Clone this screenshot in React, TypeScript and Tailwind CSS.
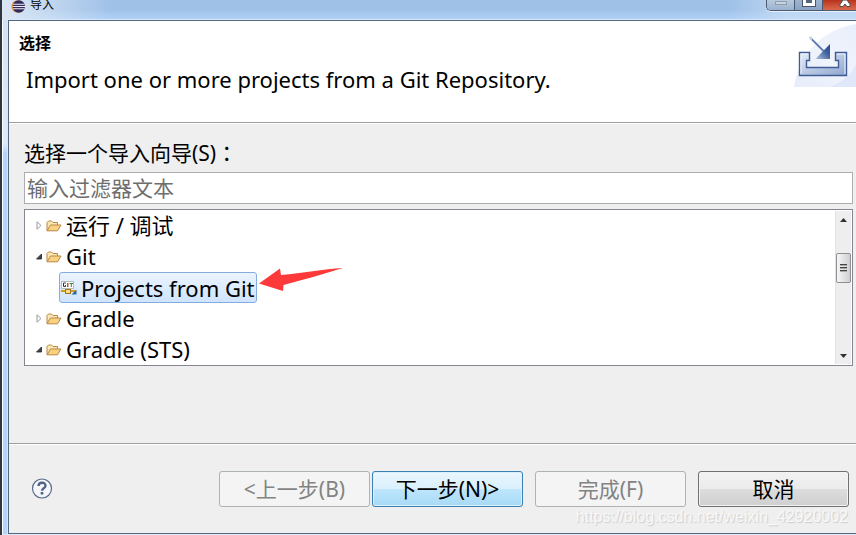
import React, { useState } from "react";

const FONT =
  "font-['Noto_Sans','Noto_Sans_CJK_SC',sans-serif]";

function EclipseIcon() {
  return (
    <svg width="15" height="14" viewBox="0 0 15 14" aria-hidden="true">
      <circle cx="6.6" cy="6.5" r="6.2" fill="#f0963c" />
      <circle cx="7.8" cy="6.5" r="6.2" fill="#322a5c" />
      <path d="M2 4.3H13.5M1.6 6.5H14M2 8.7H13.5" stroke="#eeedf6" strokeWidth="1.1" />
    </svg>
  );
}

function ImportBanner() {
  return (
    <svg width="62" height="64" viewBox="0 0 62 64" aria-hidden="true" className="block">
      <defs>
        <linearGradient id="halo" x1="0" y1="1" x2="1" y2="0">
          <stop offset="0" stopColor="#e6ecfa" />
          <stop offset="0.5" stopColor="#eff3fc" />
          <stop offset="1" stopColor="#e9effb" />
        </linearGradient>
        <linearGradient id="tray" x1="0" y1="0" x2="1" y2="1">
          <stop offset="0" stopColor="#e6edf8" />
          <stop offset="1" stopColor="#8ea5d0" />
        </linearGradient>
        <linearGradient id="head" x1="0" y1="1" x2="1" y2="0">
          <stop offset="0" stopColor="#b4c4e0" />
          <stop offset="0.6" stopColor="#3c5f9e" />
          <stop offset="1" stopColor="#2a4a8a" />
        </linearGradient>
      </defs>
      <path d="M0 64C4 34 24 8 62 1V64Z" fill="url(#halo)" />
      <path d="M36 64C52 58 58 48 62 42V64Z" fill="#dfe7f8" />
      <path
        d="M5.500 29.500H15.500V37.500H12.500V44.500H44.500V37.500H41.500V29.500H52.500V52.500H5.500Z"
        fill="url(#tray)"
        stroke="#3f5c94"
        strokeWidth="1.400"
      />
      <path d="M7 51V31H14M51 31V51M43 31H51" fill="none" stroke="#eef3fb" strokeWidth="1" />
      <path d="M16.500 15L30 28.500" stroke="#5f7cb0" strokeWidth="1.800" />
      <path d="M15.500 14L18 16.500" stroke="#c3cfe4" strokeWidth="2" />
      <path d="M36 21V36H21.500Z" fill="url(#head)" />
    </svg>
  );
}

function FolderIcon() {
  return (
    <svg width="16" height="12" viewBox="0 0 16 12" aria-hidden="true" className="shrink-0">
      <path
        d="M1 10.500V2.500L2.500 1H5.500L7 2.500H11.500V5"
        fill="#fbe7b4"
        stroke="#b98742"
        strokeLinejoin="round"
      />
      <path
        d="M1 10.800L4.500 5H15L11.500 10.800Z"
        fill="#f8d282"
        stroke="#b98742"
        strokeLinejoin="round"
      />
    </svg>
  );
}

function GitProjectIcon() {
  return (
    <svg width="16" height="16" viewBox="0 0 16 16" aria-hidden="true" className="shrink-0">
      <rect x="0.500" y="1.500" width="12" height="7" fill="#fff" stroke="#b9bdb5" />
      <path d="M4.800 3H2.500V6.500H4.500V5" fill="none" stroke="#333" />
      <path d="M6.800 3V7" stroke="#c03030" strokeWidth="1.300" />
      <path d="M8.500 3.500H12M10.300 3V7" stroke="#2f8a3f" />
      <path d="M0 11H14" stroke="#d79a1d" strokeWidth="2" />
      <rect x="4.500" y="9.500" width="5" height="4" fill="#fbe08a" stroke="#a8741a" />
      <path d="M15.500 9.500V14.500H10.500Z" fill="#2f67a5" />
    </svg>
  );
}

function Twisty({ open }: { open: boolean }) {
  return (
    <svg width="9" height="9" viewBox="0 0 9 9" aria-hidden="true">
      {open ? (
        <path d="M6.500 2V7H1.500Z" fill="#444" stroke="#222" strokeWidth="0.800" />
      ) : (
        <path d="M2 0.800L6 4.500L2 8.200Z" fill="#fff" stroke="#9a9a9a" />
      )}
    </svg>
  );
}

function FolderRow({ name, open }: { name: string; open: boolean }) {
  return (
    <li role="treeitem" aria-expanded={open} aria-label={name} className="flex h-[31px] items-center pl-2">
      <button type="button" aria-label={open ? "折叠" : "展开"} className="flex w-[13px] justify-center">
        <Twisty open={open} />
      </button>
      <button type="button" className="flex items-center gap-1 text-[22px] leading-[31px]">
        <FolderIcon />
        <span className="whitespace-nowrap">{name}</span>
      </button>
    </li>
  );
}

function PointerArrow() {
  return (
    <svg width="84" height="25" viewBox="0 0 84 25" aria-hidden="true" className="block shrink-0">
      <path d="M0 16.500L21 1.500L22 8C44 6 64 2 84 1C64 7 44 13 24.500 18L24 24Z" fill="#fd3a39" />
    </svg>
  );
}

function ScrollBar() {
  return (
    <div aria-hidden="true" className="my-px mr-px flex w-4 flex-col items-center border-l border-[#e3e3e3] bg-[#eeeeee]">
      <svg width="15" height="18" viewBox="0 0 15 18">
        <path d="M4 11L7.500 7L11 11Z" fill="#333" />
      </svg>
      <div className="mt-6 flex h-[30px] w-[15px] flex-col items-center justify-center gap-px rounded-xs border border-[#8f8f93] bg-linear-to-r from-[#f7f7f7] to-[#cfcfd2]">
        <span className="h-0.5 w-[7px] border-t border-[#444] bg-[#aaa]" />
        <span className="h-0.5 w-[7px] border-t border-[#444] bg-[#aaa]" />
        <span className="h-0.5 w-[7px] border-t border-[#444] bg-[#aaa]" />
      </div>
      <svg width="15" height="18" viewBox="0 0 15 18" className="mt-auto">
        <path d="M4 8L7.500 12L11 8Z" fill="#333" />
      </svg>
    </div>
  );
}

const BUTTON = "h-9 w-[151px] rounded-[3px] border text-[21px] leading-[34px] whitespace-nowrap";
const DISABLED = "border-[#adb2b5] bg-[#f4f4f4] text-[#838383]";

export default function App() {
  const [filter, setFilter] = useState("");
  return (
    <div className={`relative flex min-h-screen flex-col border-l-2 border-[#2f3640] bg-[#b5d5f8] text-black ${FONT}`}>
      <header className="flex h-5 items-start border-b border-[#d9e8f8] bg-[linear-gradient(to_right,#dbe7f4_0,#dbe7f400_110px,#cfe2f600_85%,#cfe2f6a0_92%),linear-gradient(to_bottom,#9fc1e8_50%,#b0d1f6)] pl-[9px]">
        <div className="flex items-start gap-1">
          <EclipseIcon />
          <h1 className="font-['Liberation_Sans','Noto_Sans_CJK_SC',sans-serif] text-[12px] leading-[11px]">导入</h1>
        </div>
        <div className="ml-auto flex h-[11px] w-[90px] overflow-hidden rounded-bl-[5px] border-b border-l border-[#4a5a70] shadow-[0_1px_0_#e8f2fc]">
          <button type="button" aria-label="最小化" className="flex w-7 items-start justify-center border-r border-[#4a5a70] bg-linear-to-b from-[#b9c9dd] to-[#9bb2cf] pt-px">
            <span className="h-1 w-3 border border-[#8d9db0] bg-[#c9d4e0]" />
          </button>
          <button type="button" aria-label="最大化" className="flex w-7 items-start justify-center border-r border-[#4a5a70] bg-linear-to-b from-[#9db3d0] to-[#8aa3c4]">
            <span className="h-1.5 w-3 border-x-3 border-b-3 border-white bg-[#55657c] outline outline-[#4a5566]" />
          </button>
          <button type="button" aria-label="关闭" className="flex grow items-start justify-end bg-linear-to-b from-[#b8301b] to-[#dc6a4c] pr-1">
            <svg width="14" height="7" viewBox="0 0 14 7" aria-hidden="true">
              <path d="M2 6.500V4.500L5 0H9L12 4.500V6.500H9L7 4L5 6.500Z" fill="#fff" stroke="#49505c" />
            </svg>
          </button>
        </div>
      </header>

      <div className="flex grow">
        <div
          aria-hidden="true"
          className="w-1.5 shrink-0 border-x border-l-white border-r-[#d5e7fb] bg-linear-to-b from-[#d3e3f5] from-0% via-[#dcebfb] via-24% to-[#b3d5fb] to-26%"
        />
        <main className="flex min-w-0 grow flex-col border-y border-l border-[#55667f] bg-[#efefef]">
          <section className="flex h-[102px] items-start justify-between border-b border-[#9f9f9f] bg-white">
            <div className="flex min-w-0 flex-col pt-2.5 pl-2.5">
              <h2 className="text-[16px] leading-6 font-bold">选择</h2>
              <p className="mt-2 pl-[7px] text-[22px] leading-8 whitespace-nowrap">
                Import one or more projects from a Git Repository.
              </p>
            </div>
            <div className="mt-0.5 shrink-0">
              <ImportBanner />
            </div>
          </section>

          <section className="flex flex-col border-t border-white pr-[3px] pl-[15px]">
            <label htmlFor="filter" className="mt-3 text-[21px] leading-8">
              选择一个导入向导(S)
              <span className="font-['Noto_Sans_CJK_TC',sans-serif]">：</span>
            </label>
            <input
              id="filter"
              type="text"
              value={filter}
              onChange={(e) => setFilter(e.target.value)}
              placeholder="输入过滤器文本"
              className="mt-[3px] h-8 w-full border border-[#abadb3] bg-white px-0.5 text-[21px] placeholder:text-[#6d6d6d] focus:outline-none"
            />
            <div className="mt-[5px] flex border border-[#828790] bg-white">
              <ul role="tree" aria-label="导入向导" className="min-w-0 grow">
                <FolderRow name="运行 / 调试" open={false} />
                <FolderRow name="Git" open={true} />
                <li role="treeitem" aria-selected="true" className="flex h-[31px] items-center pl-[34px]">
                  <button
                    type="button"
                    className="flex h-[31px] items-center gap-1 rounded-[3px] border border-[#84acdd] bg-linear-to-b from-[#ebf4fe] to-[#cfe4fe] px-px text-[22px] leading-7 whitespace-nowrap"
                  >
                    <GitProjectIcon />
                    Projects from Git
                  </button>
                  <span className="-mt-4 ml-0.5">
                    <PointerArrow />
                  </span>
                </li>
                <FolderRow name="Gradle" open={false} />
                <FolderRow name="Gradle (STS)" open={true} />
              </ul>
              <ScrollBar />
            </div>
          </section>

          <footer className="mt-auto flex h-[90px] items-center border-t border-[#9f9f9f] pr-[7px] pl-[22px] shadow-[inset_0_1px_0_#fff]">
            <button type="button" aria-label="帮助" className="shrink-0">
              <svg width="22" height="22" viewBox="0 0 22 22" aria-hidden="true">
                <circle cx="11" cy="10.500" r="9.500" fill="#f4f6fa" stroke="#586b8c" strokeWidth="1.200" />
                <path
                  d="M7.500 8C7.500 3.700 14.500 3.700 14.500 7.700C14.500 10.300 11 10.100 11 12.700"
                  fill="none"
                  stroke="#4d6085"
                  strokeWidth="2.300"
                />
                <rect x="9.700" y="14" width="2.600" height="2.500" fill="#4d6085" />
              </svg>
            </button>
            <div className="ml-auto flex gap-3">
              <div className="flex gap-0.5">
                <button type="button" disabled className={`${BUTTON} ${DISABLED}`}>
                  &lt;上一步(B)
                </button>
                <button
                  type="button"
                  className={`${BUTTON} border-[#3c7fb1] bg-[linear-gradient(#eaf6fd,#d9f0fc_50%,#bee6fd_50%,#a7d9f5)] shadow-[inset_0_0_0_1px_#d9f1fc]`}
                >
                  下一步(N)&gt;
                </button>
              </div>
              <button type="button" disabled className={`${BUTTON} ${DISABLED}`}>
                完成(F)
              </button>
              <button
                type="button"
                className={`${BUTTON} border-[#707070] bg-[linear-gradient(#f2f2f2,#ebebeb_50%,#dddddd_50%,#cfcfcf)] shadow-[inset_0_0_0_1px_#f3f3f3]`}
              >
                取消
              </button>
            </div>
          </footer>
        </main>
      </div>
      <div aria-hidden="true" className="h-px bg-[#dcebfb]" />

      <span className="pointer-events-none absolute right-2 bottom-2 font-['Liberation_Sans',sans-serif] text-[16px] leading-5 text-[#f8f8f8] [text-shadow:1px_1px_1px_#cccccc]">
        https://blog.csdn.net/weixin_42920002
      </span>
    </div>
  );
}
